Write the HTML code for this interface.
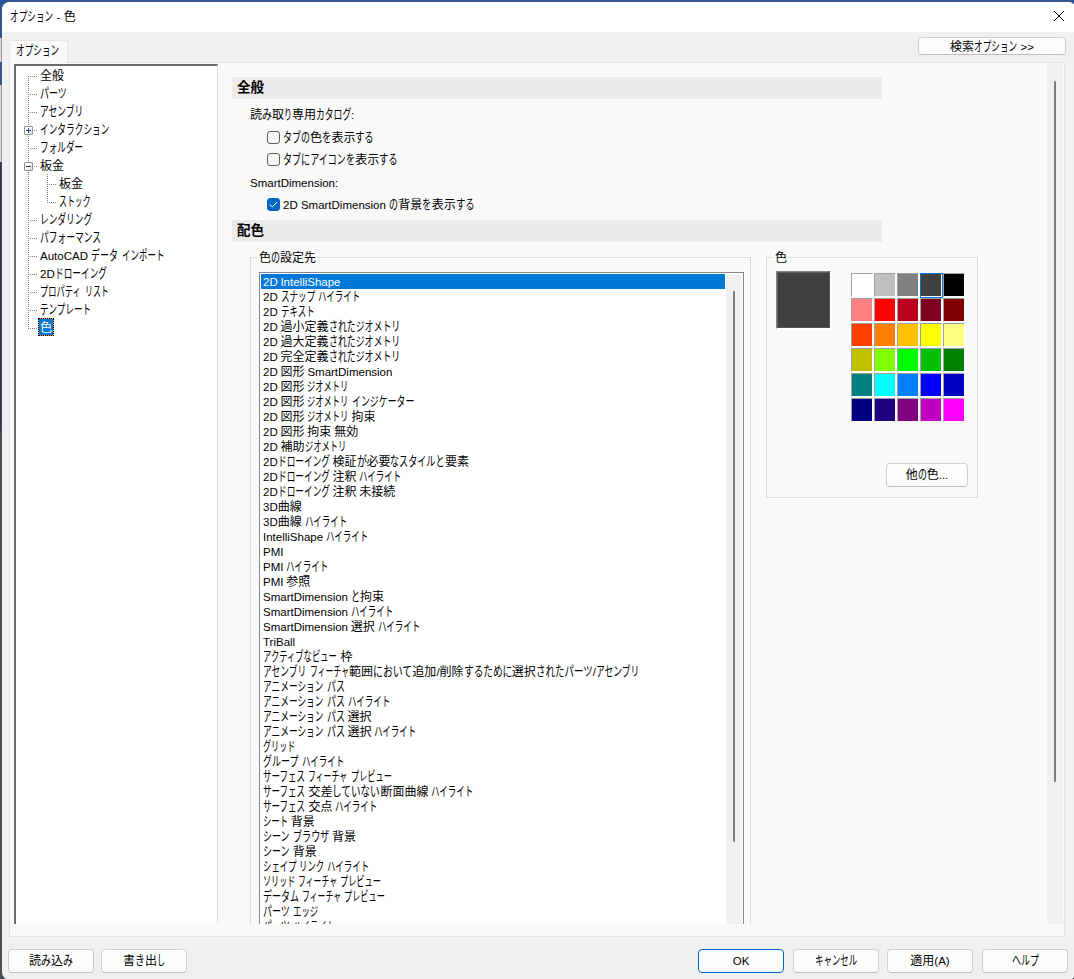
<!DOCTYPE html>
<html lang="ja"><head><meta charset="utf-8"><title>オプション - 色</title>
<style>
*{box-sizing:border-box;margin:0;padding:0}
html,body{width:1074px;height:979px;overflow:hidden}
body{position:relative;background:#474f55;font-family:"Liberation Sans","Noto Sans CJK JP",sans-serif;font-size:12px;color:#000;line-height:16px}
.abs{position:absolute}
.k{display:inline-block;white-space:nowrap;transform-origin:0 85%;vertical-align:baseline;line-height:1}

.l{font-size:11.5px}
.bgt{position:absolute;left:0;top:0;width:1074px;height:12px;background:#2b579a}
.bgl{position:absolute;left:0;width:3px}
#win{position:absolute;left:2px;top:2px;width:1074px;height:978px;background:#f0f0f0;border-radius:8px;overflow:hidden;box-shadow:0 0 0 1px rgba(90,90,90,.55)}
#title{position:absolute;left:0;top:0;width:100%;height:30px;background:#fff}
#title .tx{position:absolute;left:8px;top:7px;white-space:nowrap}
.btn{position:absolute;height:24px;background:#fdfdfd;border:1px solid #d0d0d0;border-bottom-color:#bdbdbd;border-radius:4px;text-align:center;line-height:23px;white-space:nowrap}
.btn.def{border-color:#0067c0}
#tab{position:absolute;left:7px;top:38px;width:59px;height:23px;background:#f9f9f9;border:1px solid #e5e5e5;border-bottom:none;border-radius:2px 2px 0 0;z-index:2}
#tab .tx{position:absolute;left:6px;top:2px;white-space:nowrap}
#page{position:absolute;left:7px;top:60px;width:1056px;height:875px;background:#f9f9f9;border:1px solid #e2e2e2}
#tree{position:absolute;left:4px;top:1px;width:204px;height:860px;background:#fff;border-left:2px solid #6d6d6d;border-top:2px solid #6d6d6d;border-right:1px solid #e3e3e3;overflow:hidden}
.ti{position:absolute;height:18px;line-height:20px;white-space:nowrap}
.dv{position:absolute;width:1px;background-image:linear-gradient(#808080 50%,transparent 50%);background-size:1px 2px}
.dh{position:absolute;height:1px;background-image:linear-gradient(90deg,#808080 50%,transparent 50%);background-size:2px 1px}
.pm{position:absolute;width:9px;height:9px;border:1px solid #919191;background:linear-gradient(135deg,#fff 45%,#d4d4d4);border-radius:1px}
.pm i{position:absolute;left:1px;top:3px;width:5px;height:1px;background:#2a3a8c}
.pm b{position:absolute;left:3px;top:1px;width:1px;height:5px;background:#2a3a8c}
#pane{position:absolute;left:213px;top:3px;width:824px;height:858px;overflow:hidden}
.hd{position:absolute;left:10px;width:650px;height:22px;background:#ebebeb;font-weight:bold;font-size:13.5px;line-height:21px;padding-left:5px}
.lb{position:absolute;white-space:nowrap;line-height:16px}
.cb{position:absolute;width:13px;height:13px;border:1px solid #606060;border-radius:3px;background:#f4f4f4}
.cb.on{background:#0067c0;border-color:#0067c0}
.gb{position:absolute;border:1px solid #dcdcdc}
.gb .cap{position:absolute;top:-8px;left:6px;background:#f9f9f9;padding:0 2px;white-space:nowrap}
#list{position:absolute;left:37px;top:207px;width:485px;height:700px;background:#fff;border-left:1px solid #828790;border-top:1px solid #828790;border-right:1px solid #828790;overflow:hidden}
#list .it{position:absolute;left:1px;width:464px;height:15px;line-height:17px;word-spacing:-0.5px;padding-left:2px;white-space:nowrap}
#list .it.sel{background:#0078d7;color:#fff}
#lsb{position:absolute;left:466px;top:1px;width:16px;height:700px;background:#f0f0f0}
#lsb i{position:absolute;left:7px;top:17px;width:2px;height:551px;background:#7e7e7e;border-radius:1px}
#vsb{position:absolute;left:1037px;top:0px;width:16px;height:861px;background:#f0f0f0;border-left:0}
#vsb i{position:absolute;left:7px;top:18px;width:2px;height:701px;background:#7e7e7e;border-radius:1px}
#prev{position:absolute;left:553px;top:206px;width:55px;height:58px;background:#404040;border:1px solid;border-color:#858585 #fff #fff #858585;box-shadow:inset 1px 1px 0 #5e5e5e,inset -1px -1px 0 #585858,1px 1px 0 #fff}
.pc{position:absolute;width:22px;height:24px;border:1px solid;border-color:#a0a0a0 #fff #fff #a0a0a0}
.pc.sel i{position:absolute;left:-1px;top:-1px;width:23px;height:25px;border:1px solid #0078d7}
</style></head><body>
<div class="bgt"></div>
<div class="bgl" style="top:0;height:38px;background:#2b579a"></div>
<div class="bgl" style="top:38px;height:24px;background:#dcdcdc"></div>
<div class="bgl" style="top:62px;height:23px;background:#2b579a"></div>
<div class="bgl" style="top:85px;height:77px;background:#dcdcdc"></div>
<div class="bgl" style="top:162px;height:269px;background:#31364a"></div>
<div id="win">
<div id="title"><div class="tx"><span class="k" style="width:3.60em;transform:scale(0.720,1.09)">オプション</span> <span class="l">-</span> 色</div>
<svg class="abs" style="left:1051px;top:8px" width="12" height="12" viewBox="0 0 12 12"><path d="M1 1 L11 11 M11 1 L1 11" stroke="#000" stroke-width="1" fill="none"/></svg>
</div>
<div class="btn" style="left:916px;top:35px;width:148px;height:18px;line-height:18px">検索<span class="k" style="width:3.60em;transform:scale(0.720,1.09)">オプション</span> <span class="l">&gt;&gt;</span></div>
<div id="tab"><div class="tx"><span class="k" style="width:3.60em;transform:scale(0.720,1.09)">オプション</span></div></div>
<div id="page">
<div id="tree">

<div class="dv" style="left:12px;top:10px;height:253px"></div>
<div class="dv" style="left:31px;top:108px;height:29px"></div>
<div class="dh" style="left:14px;top:10px;width:8px"></div>
<div class="ti" style="left:24px;top:0px">全般</div>
<div class="dh" style="left:14px;top:28px;width:8px"></div>
<div class="ti" style="left:24px;top:18px"><span class="k" style="width:2.25em;transform:scale(0.750,1.09)">パーツ</span></div>
<div class="dh" style="left:14px;top:46px;width:8px"></div>
<div class="ti" style="left:24px;top:36px"><span class="k" style="width:3.65em;transform:scale(0.730,1.09)">アセンブリ</span></div>
<div class="dh" style="left:14px;top:64px;width:8px"></div>
<div class="pm" style="left:8px;top:60px"><i></i><b></b></div>
<div class="ti" style="left:24px;top:54px"><span class="k" style="width:5.78em;transform:scale(0.723,1.09)">インタラクション</span></div>
<div class="dh" style="left:14px;top:82px;width:8px"></div>
<div class="ti" style="left:24px;top:72px"><span class="k" style="width:3.60em;transform:scale(0.720,1.09)">フォルダー</span></div>
<div class="dh" style="left:14px;top:100px;width:8px"></div>
<div class="pm" style="left:8px;top:96px"><i></i></div>
<div class="ti" style="left:24px;top:90px">板金</div>
<div class="dh" style="left:33px;top:118px;width:8px"></div>
<div class="ti" style="left:43px;top:108px">板金</div>
<div class="dh" style="left:33px;top:136px;width:8px"></div>
<div class="ti" style="left:43px;top:126px"><span class="k" style="width:2.63em;transform:scale(0.657,1.09)">ストック</span></div>
<div class="dh" style="left:14px;top:154px;width:8px"></div>
<div class="ti" style="left:24px;top:144px"><span class="k" style="width:4.35em;transform:scale(0.725,1.09)">レンダリング</span></div>
<div class="dh" style="left:14px;top:172px;width:8px"></div>
<div class="ti" style="left:24px;top:162px"><span class="k" style="width:5.10em;transform:scale(0.729,1.09)">パフォーマンス</span></div>
<div class="dh" style="left:14px;top:190px;width:8px"></div>
<div class="ti" style="left:24px;top:180px"><span class="l">AutoCAD</span> <span class="k" style="width:2.25em;transform:scale(0.750,1.09)">データ</span> <span class="k" style="width:3.53em;transform:scale(0.706,1.09)">インポート</span></div>
<div class="dh" style="left:14px;top:208px;width:8px"></div>
<div class="ti" style="left:24px;top:198px"><span class="l">2D</span><span class="k" style="width:4.33em;transform:scale(0.722,1.09)">ドローイング</span></div>
<div class="dh" style="left:14px;top:226px;width:8px"></div>
<div class="ti" style="left:24px;top:216px"><span class="k" style="width:3.43em;transform:scale(0.686,1.09)">プロパティ</span> <span class="k" style="width:1.98em;transform:scale(0.660,1.09)">リスト</span></div>
<div class="dh" style="left:14px;top:244px;width:8px"></div>
<div class="ti" style="left:24px;top:234px"><span class="k" style="width:4.28em;transform:scale(0.713,1.09)">テンプレート</span></div>
<div class="dh" style="left:14px;top:262px;width:8px"></div>
<div class="ti" style="left:22px;top:252px;background:#0078d7;color:#fff;padding:0 2px;box-shadow:inset 0 0 0 1px #ff8a2a;outline:1px dotted #000;outline-offset:-1px">色</div>
</div>
<div id="pane">
<div class="hd" style="left:9px;top:11px">全般</div>
<div class="lb" style="left:27px;top:41px">読<span class="k" style="width:0.83em;transform:scale(0.830,1.09)">み</span>取<span class="k" style="width:0.66em;transform:scale(0.660,1.09)">り</span>専用<span class="k" style="width:2.93em;transform:scale(0.733,1.09)">カタログ</span><span class="l">:</span></div>
<div class="cb" style="left:44px;top:65px"></div><div class="lb" style="left:60px;top:64px"><span class="k" style="width:2.25em;transform:scale(0.750,1.09)">タブの</span>色<span class="k" style="width:0.78em;transform:scale(0.780,1.09)">を</span>表示<span class="k" style="width:1.56em;transform:scale(0.780,1.09)">する</span></div>
<div class="cb" style="left:44px;top:87px"></div><div class="lb" style="left:60px;top:86px"><span class="k" style="width:6.03em;transform:scale(0.754,1.09)">タブにアイコンを</span>表示<span class="k" style="width:1.56em;transform:scale(0.780,1.09)">する</span></div>
<div class="lb" style="left:27px;top:109px"><span class="l">SmartDimension:</span></div>
<div class="cb on" style="left:44px;top:132px"><svg class="abs" style="left:0;top:0" width="11" height="11" viewBox="0 0 11 11"><path d="M2 5.9 L4.3 7.9 L8.9 3.2" stroke="#fff" stroke-width="1" fill="none" stroke-linecap="round" stroke-linejoin="round"/></svg></div><div class="lb" style="left:60px;top:131px"><span class="l">2D SmartDimension</span> <span class="k" style="width:0.75em;transform:scale(0.750,1.09)">の</span>背景<span class="k" style="width:0.78em;transform:scale(0.780,1.09)">を</span>表示<span class="k" style="width:1.56em;transform:scale(0.780,1.09)">する</span></div>
<div class="hd" style="left:9px;top:154px">配色</div>
<div class="gb" style="left:27px;top:191px;width:501px;height:700px"><div class="cap">色<span class="k" style="width:0.75em;transform:scale(0.750,1.09)">の</span>設定先</div></div>
<div id="list" style="left:36px;top:206px">
<div class="it sel" style="top:1px"><span class="l">2D IntelliShape</span></div>
<div class="it" style="top:16px"><span class="l">2D</span> <span class="k" style="width:2.85em;transform:scale(0.713,1.09)">スナップ</span> <span class="k" style="width:3.54em;transform:scale(0.708,1.09)">ハイライト</span></div>
<div class="it" style="top:31px"><span class="l">2D</span> <span class="k" style="width:2.83em;transform:scale(0.708,1.09)">テキスト</span></div>
<div class="it" style="top:46px"><span class="l">2D</span> 過小定義<span class="k" style="width:5.94em;transform:scale(0.742,1.09)">されたジオメトリ</span></div>
<div class="it" style="top:61px"><span class="l">2D</span> 過大定義<span class="k" style="width:5.94em;transform:scale(0.742,1.09)">されたジオメトリ</span></div>
<div class="it" style="top:76px"><span class="l">2D</span> 完全定義<span class="k" style="width:5.94em;transform:scale(0.742,1.09)">されたジオメトリ</span></div>
<div class="it" style="top:91px"><span class="l">2D</span> 図形 <span class="l">SmartDimension</span></div>
<div class="it" style="top:106px"><span class="l">2D</span> 図形 <span class="k" style="width:3.45em;transform:scale(0.690,1.09)">ジオメトリ</span></div>
<div class="it" style="top:121px"><span class="l">2D</span> 図形 <span class="k" style="width:3.45em;transform:scale(0.690,1.09)">ジオメトリ</span> <span class="k" style="width:5.20em;transform:scale(0.743,1.09)">インジケーター</span></div>
<div class="it" style="top:136px"><span class="l">2D</span> 図形 <span class="k" style="width:3.45em;transform:scale(0.690,1.09)">ジオメトリ</span> 拘束</div>
<div class="it" style="top:151px"><span class="l">2D</span> 図形 拘束 無効</div>
<div class="it" style="top:166px"><span class="l">2D</span> 補助<span class="k" style="width:3.45em;transform:scale(0.690,1.09)">ジオメトリ</span></div>
<div class="it" style="top:181px"><span class="l">2D</span><span class="k" style="width:4.33em;transform:scale(0.722,1.09)">ドローイング</span> 検証<span class="k" style="width:0.83em;transform:scale(0.830,1.09)">が</span>必要<span class="k" style="width:4.54em;transform:scale(0.757,1.09)">なスタイルと</span>要素</div>
<div class="it" style="top:196px"><span class="l">2D</span><span class="k" style="width:4.33em;transform:scale(0.722,1.09)">ドローイング</span> 注釈 <span class="k" style="width:3.54em;transform:scale(0.708,1.09)">ハイライト</span></div>
<div class="it" style="top:211px"><span class="l">2D</span><span class="k" style="width:4.33em;transform:scale(0.722,1.09)">ドローイング</span> 注釈 未接続</div>
<div class="it" style="top:226px"><span class="l">3D</span>曲線</div>
<div class="it" style="top:241px"><span class="l">3D</span>曲線 <span class="k" style="width:3.54em;transform:scale(0.708,1.09)">ハイライト</span></div>
<div class="it" style="top:256px"><span class="l">IntelliShape</span> <span class="k" style="width:3.54em;transform:scale(0.708,1.09)">ハイライト</span></div>
<div class="it" style="top:271px"><span class="l">PMI</span></div>
<div class="it" style="top:286px"><span class="l">PMI</span> <span class="k" style="width:3.54em;transform:scale(0.708,1.09)">ハイライト</span></div>
<div class="it" style="top:301px"><span class="l">PMI</span> 参照</div>
<div class="it" style="top:316px"><span class="l">SmartDimension</span> <span class="k" style="width:0.76em;transform:scale(0.760,1.09)">と</span>拘束</div>
<div class="it" style="top:331px"><span class="l">SmartDimension</span> <span class="k" style="width:3.54em;transform:scale(0.708,1.09)">ハイライト</span></div>
<div class="it" style="top:346px"><span class="l">SmartDimension</span> 選択 <span class="k" style="width:3.54em;transform:scale(0.708,1.09)">ハイライト</span></div>
<div class="it" style="top:361px"><span class="l">TriBall</span></div>
<div class="it" style="top:376px"><span class="k" style="width:6.23em;transform:scale(0.692,1.09)">アクティブなビュー</span> 枠</div>
<div class="it" style="top:391px"><span class="k" style="width:3.65em;transform:scale(0.730,1.09)">アセンブリ</span> <span class="k" style="width:3.27em;transform:scale(0.654,1.09)">フィーチャ</span>範囲<span class="k" style="width:3.29em;transform:scale(0.823,1.09)">において</span>追加<span class="l">/</span>削除<span class="k" style="width:4.02em;transform:scale(0.804,1.09)">するために</span>選択<span class="k" style="width:4.74em;transform:scale(0.790,1.09)">されたパーツ</span><span class="l">/</span><span class="k" style="width:3.65em;transform:scale(0.730,1.09)">アセンブリ</span></div>
<div class="it" style="top:406px"><span class="k" style="width:5.07em;transform:scale(0.724,1.09)">アニメーション</span> <span class="k" style="width:1.50em;transform:scale(0.750,1.09)">パス</span></div>
<div class="it" style="top:421px"><span class="k" style="width:5.07em;transform:scale(0.724,1.09)">アニメーション</span> <span class="k" style="width:1.50em;transform:scale(0.750,1.09)">パス</span> <span class="k" style="width:3.54em;transform:scale(0.708,1.09)">ハイライト</span></div>
<div class="it" style="top:436px"><span class="k" style="width:5.07em;transform:scale(0.724,1.09)">アニメーション</span> <span class="k" style="width:1.50em;transform:scale(0.750,1.09)">パス</span> 選択</div>
<div class="it" style="top:451px"><span class="k" style="width:5.07em;transform:scale(0.724,1.09)">アニメーション</span> <span class="k" style="width:1.50em;transform:scale(0.750,1.09)">パス</span> 選択 <span class="k" style="width:3.54em;transform:scale(0.708,1.09)">ハイライト</span></div>
<div class="it" style="top:466px"><span class="k" style="width:2.70em;transform:scale(0.675,1.09)">グリッド</span></div>
<div class="it" style="top:481px"><span class="k" style="width:3.00em;transform:scale(0.750,1.09)">グループ</span> <span class="k" style="width:3.54em;transform:scale(0.708,1.09)">ハイライト</span></div>
<div class="it" style="top:496px"><span class="k" style="width:3.55em;transform:scale(0.710,1.09)">サーフェス</span> <span class="k" style="width:3.27em;transform:scale(0.654,1.09)">フィーチャ</span> <span class="k" style="width:3.40em;transform:scale(0.680,1.09)">プレビュー</span></div>
<div class="it" style="top:511px"><span class="k" style="width:3.55em;transform:scale(0.710,1.09)">サーフェス</span> 交差<span class="k" style="width:4.00em;transform:scale(0.800,1.09)">していない</span>断面曲線 <span class="k" style="width:3.54em;transform:scale(0.708,1.09)">ハイライト</span></div>
<div class="it" style="top:526px"><span class="k" style="width:3.55em;transform:scale(0.710,1.09)">サーフェス</span> 交点 <span class="k" style="width:3.54em;transform:scale(0.708,1.09)">ハイライト</span></div>
<div class="it" style="top:541px"><span class="k" style="width:2.08em;transform:scale(0.693,1.09)">シート</span> 背景</div>
<div class="it" style="top:556px"><span class="k" style="width:2.25em;transform:scale(0.750,1.09)">シーン</span> <span class="k" style="width:3.03em;transform:scale(0.758,1.09)">ブラウザ</span> 背景</div>
<div class="it" style="top:571px"><span class="k" style="width:2.25em;transform:scale(0.750,1.09)">シーン</span> 背景</div>
<div class="it" style="top:586px"><span class="k" style="width:2.80em;transform:scale(0.700,1.09)">シェイプ</span> <span class="k" style="width:2.10em;transform:scale(0.700,1.09)">リンク</span> <span class="k" style="width:3.54em;transform:scale(0.708,1.09)">ハイライト</span></div>
<div class="it" style="top:601px"><span class="k" style="width:2.70em;transform:scale(0.675,1.09)">ソリッド</span> <span class="k" style="width:3.27em;transform:scale(0.654,1.09)">フィーチャ</span> <span class="k" style="width:3.40em;transform:scale(0.680,1.09)">プレビュー</span></div>
<div class="it" style="top:616px"><span class="k" style="width:3.00em;transform:scale(0.750,1.09)">データム</span> <span class="k" style="width:3.27em;transform:scale(0.654,1.09)">フィーチャ</span> <span class="k" style="width:3.40em;transform:scale(0.680,1.09)">プレビュー</span></div>
<div class="it" style="top:631px"><span class="k" style="width:2.25em;transform:scale(0.750,1.09)">パーツ</span> <span class="k" style="width:2.10em;transform:scale(0.700,1.09)">エッジ</span></div>
<div class="it" style="top:646px"><span class="k" style="width:2.25em;transform:scale(0.750,1.09)">パーツ</span> <span class="k" style="width:3.54em;transform:scale(0.708,1.09)">ハイライト</span></div>
<div class="it" style="top:661px"><span class="k" style="width:2.25em;transform:scale(0.750,1.09)">パーツ</span> 面</div>
<div id="lsb"><i></i></div></div>
<div class="gb" style="left:543px;top:191px;width:212px;height:241px"><div class="cap">色</div></div>
<div id="prev" style="left:553px;top:205px"></div>
<div class="pc" style="left:628px;top:207px;background:#ffffff"></div>
<div class="pc" style="left:651px;top:207px;background:#c0c0c0"></div>
<div class="pc" style="left:674px;top:207px;background:#808080"></div>
<div class="pc sel" style="left:697px;top:207px;background:#404040"><i></i></div>
<div class="pc" style="left:720px;top:207px;background:#000000"></div>
<div class="pc" style="left:628px;top:232px;background:#ff8080"></div>
<div class="pc" style="left:651px;top:232px;background:#ff0000"></div>
<div class="pc" style="left:674px;top:232px;background:#bb001f"></div>
<div class="pc" style="left:697px;top:232px;background:#800020"></div>
<div class="pc" style="left:720px;top:232px;background:#800000"></div>
<div class="pc" style="left:628px;top:257px;background:#ff4000"></div>
<div class="pc" style="left:651px;top:257px;background:#ff8000"></div>
<div class="pc" style="left:674px;top:257px;background:#ffc000"></div>
<div class="pc" style="left:697px;top:257px;background:#ffff00"></div>
<div class="pc" style="left:720px;top:257px;background:#ffff80"></div>
<div class="pc" style="left:628px;top:282px;background:#c0c000"></div>
<div class="pc" style="left:651px;top:282px;background:#80ff00"></div>
<div class="pc" style="left:674px;top:282px;background:#00ff00"></div>
<div class="pc" style="left:697px;top:282px;background:#00c000"></div>
<div class="pc" style="left:720px;top:282px;background:#008000"></div>
<div class="pc" style="left:628px;top:307px;background:#008080"></div>
<div class="pc" style="left:651px;top:307px;background:#00ffff"></div>
<div class="pc" style="left:674px;top:307px;background:#0080ff"></div>
<div class="pc" style="left:697px;top:307px;background:#0000ff"></div>
<div class="pc" style="left:720px;top:307px;background:#0000c0"></div>
<div class="pc" style="left:628px;top:332px;background:#000080"></div>
<div class="pc" style="left:651px;top:332px;background:#200080"></div>
<div class="pc" style="left:674px;top:332px;background:#800080"></div>
<div class="pc" style="left:697px;top:332px;background:#c000c0"></div>
<div class="pc" style="left:720px;top:332px;background:#ff00ff"></div>
<div class="btn" style="left:663px;top:397px;width:82px;height:24px">他<span class="k" style="width:0.75em;transform:scale(0.750,1.09)">の</span>色<span class="l">...</span></div>
</div>
<div id="vsb"><i></i></div>
</div>
<div class="btn " style="left:6px;top:947px;width:86px">読<span class="k" style="width:0.83em;transform:scale(0.830,1.09)">み</span>込<span class="k" style="width:0.83em;transform:scale(0.830,1.09)">み</span></div>
<div class="btn " style="left:99px;top:947px;width:86px">書<span class="k" style="width:0.83em;transform:scale(0.830,1.09)">き</span>出<span class="k" style="width:0.68em;transform:scale(0.680,1.09)">し</span></div>
<div class="btn def" style="left:696px;top:947px;width:86px"><span class="l">OK</span></div>
<div class="btn " style="left:791px;top:947px;width:86px"><span class="k" style="width:3.52em;transform:scale(0.704,1.09)">キャンセル</span></div>
<div class="btn " style="left:885px;top:947px;width:86px">適用<span class="l">(A)</span></div>
<div class="btn " style="left:980px;top:947px;width:86px"><span class="k" style="width:2.25em;transform:scale(0.750,1.09)">ヘルプ</span></div>
</div></body></html>
